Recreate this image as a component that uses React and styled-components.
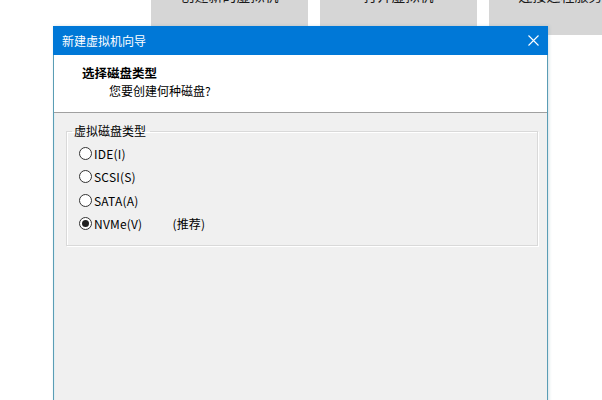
import React from 'react';
import styled, { createGlobalStyle } from 'styled-components';

const GlobalStyle = createGlobalStyle`
  html, body {
    margin: 0;
    padding: 0;
    background: #ffffff;
    overflow: hidden;
  }
  body {
    width: 602px;
    height: 400px;
    position: relative;
    font-family: 'Noto Sans CJK SC', 'Noto Sans', sans-serif;
  }
`;

const Launcher = styled.div`
  display: flex;
  gap: 12px;
  padding-left: 151px;
  margin-top: -40px;
`;

const LaunchButton = styled.div`
  flex: 0 0 157px;
  height: 75px;
  background: #d6d6d6;
  color: #1a1a1a;
  font-size: 14px;
  line-height: 20px;
  padding-top: 25px;
  box-sizing: border-box;
  text-align: center;
  white-space: nowrap;
`;

const Dialog = styled.div`
  position: absolute;
  left: 53px;
  top: 26px;
  width: 495px;
  height: 400px;
  box-sizing: border-box;
  border: 1px solid #5a9db5;
  border-top: none;
  background: #f0f0f0;
  box-shadow: 1px 0 3px rgba(90, 140, 160, 0.25);
  display: flex;
  flex-direction: column;
`;

const TitleBar = styled.div`
  height: 29px;
  margin: 0 -1px;
  background: #0078d7;
  color: #ffffff;
  display: flex;
  align-items: center;
  padding-left: 9px;
  font-size: 12px;
`;

const TitleText = styled.span`
  flex: 1;
  line-height: 16px;
`;

const CloseButton = styled.div`
  width: 30px;
  height: 29px;
  display: flex;
  align-items: center;
  justify-content: center;
`;

const Header = styled.div`
  background: #ffffff;
  border-bottom: 1px solid #a0a0a0;
  padding-top: 9px;
  height: 48px;
  color: #000;
`;

const HeaderTitle = styled.div`
  font-size: 12.5px;
  font-weight: bold;
  line-height: 17px;
  padding-left: 28px;
`;

const HeaderSub = styled.div`
  font-size: 12px;
  line-height: 17px;
  margin-top: 1px;
  padding-left: 55px;
`;

const Body = styled.div`
  flex: 1;
  padding: 10px 9px 0 11px;
  border-left: 1px solid #e2eef2;
`;

const Group = styled.fieldset`
  margin: 0;
  padding: 0;
  border: 1px solid #d9d9d9;
  box-shadow: inset 1px 1px 0 #ffffff, 1px 1px 0 #ffffff;
  min-inline-size: 0;
`;

const Legend = styled.legend`
  margin-left: 5px;
  padding: 0 4px 0 2px;
  font-size: 12px;
  line-height: 16px;
  color: #000;
`;

const OptionList = styled.div`
  display: flex;
  flex-direction: column;
  padding: 3px 0 10px 12px;
`;

const Option = styled.label`
  height: 23.3px;
  display: flex;
  align-items: center;
  font-size: 12px;
  letter-spacing: 0.2px;
  color: #000;
`;

const Radio = styled.span`
  width: 13px;
  height: 13px;
  box-sizing: border-box;
  border-radius: 50%;
  border: 1px solid #333333;
  background: #ffffff;
  display: flex;
  align-items: center;
  justify-content: center;
  margin-right: 2px;

  &::after {
    content: '';
    width: 7px;
    height: 7px;
    border-radius: 50%;
    background: ${p => (p.checked ? '#222222' : 'transparent')};
  }
`;

const Hint = styled.span`
  margin-left: 30px;
`;

const options = [
  { label: 'IDE(I)' },
  { label: 'SCSI(S)' },
  { label: 'SATA(A)' },
  { label: 'NVMe(V)', checked: true, hint: '(推荐)' },
];

export default function App() {
  return (
    <>
      <GlobalStyle />
      <Launcher>
        <LaunchButton>创建新的虚拟机</LaunchButton>
        <LaunchButton>打开虚拟机</LaunchButton>
        <LaunchButton>连接远程服务器</LaunchButton>
      </Launcher>
      <Dialog>
        <TitleBar>
          <TitleText>新建虚拟机向导</TitleText>
          <CloseButton>
            <svg width="11" height="11" viewBox="0 0 11 11">
              <path d="M0.5 0.5 L10.5 10.5 M10.5 0.5 L0.5 10.5" stroke="#ffffff" strokeWidth="1.1" fill="none" />
            </svg>
          </CloseButton>
        </TitleBar>
        <Header>
          <HeaderTitle>选择磁盘类型</HeaderTitle>
          <HeaderSub>您要创建何种磁盘?</HeaderSub>
        </Header>
        <Body>
          <Group>
            <Legend>虚拟磁盘类型</Legend>
            <OptionList>
              {options.map(o => (
                <Option key={o.label}>
                  <Radio checked={o.checked} />
                  {o.label}
                  {o.hint && <Hint>{o.hint}</Hint>}
                </Option>
              ))}
            </OptionList>
          </Group>
        </Body>
      </Dialog>
    </>
  );
}
